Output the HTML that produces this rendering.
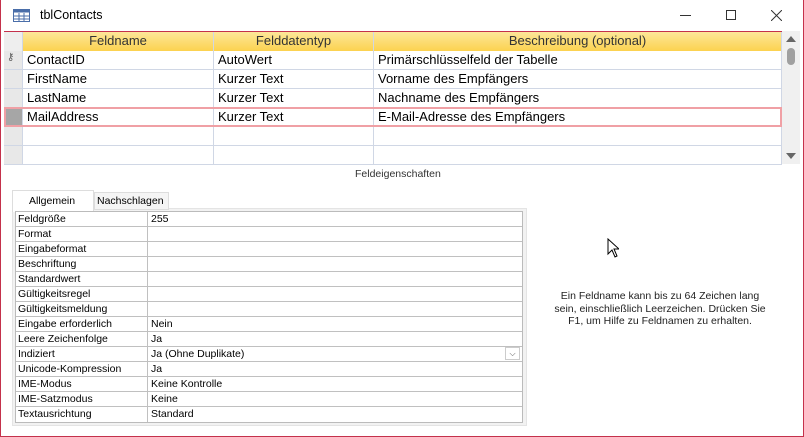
<!DOCTYPE html>
<html><head><style>
*{margin:0;padding:0;box-sizing:border-box}
body{width:804px;height:437px;background:#fff;font-family:"Liberation Sans",sans-serif;position:relative;overflow:hidden}
.win{position:absolute;left:0;top:0;width:804px;height:437px;border:1px solid #c4314b;border-top:none}
.title{position:absolute;left:40px;top:8px;font-size:12.5px;color:#000}
.abs{position:absolute}
.grid{position:absolute;left:4px;top:31px;width:778px;border-top:1px solid #c4314b}
.hdr{position:absolute;top:0;height:19px;background:linear-gradient(#fde79a,#fcd24f);color:#333;font-size:13px;text-align:center;line-height:18px;border-right:1px solid #d0d7e5}
.cell{position:absolute;height:19px;font-size:13px;line-height:18px;padding-left:4px;border-right:1px solid #d0d7e5;border-bottom:1px solid #d0d7e5;color:#000;background:#fff}
.sel{position:absolute;left:0;width:19px;height:19px;background:#e8e8e8;border-bottom:1px solid #d0d7e5;border-right:1px solid #d0d7e5}
.pt{position:absolute;left:15px;top:211px;width:508px;border:1px solid #bbb;background:#fff}
.pr{height:15px;border-bottom:1px solid #c0c0c0;font-size:10.5px;line-height:14px;display:flex}
.pr div:first-child{width:132px;border-right:1px solid #c0c0c0;padding-left:2px}
.pr div:last-child{padding-left:3px;flex:1}
</style></head><body>
<div class="win"></div>
<svg class="abs" style="left:13px;top:9px" width="17" height="13"><rect x="0.5" y="0.5" width="16" height="12" fill="#fff" stroke="#4a6ea9"/><rect x="0.5" y="0.5" width="16" height="3" fill="#4a6ea9"/><path d="M0 7H17M0 10H17M6 4V13M11 4V13" stroke="#4a6ea9"/></svg>
<div class="title">tblContacts</div>
<div class="abs" style="left:680px;top:15px;width:11px;border-top:1px solid #333"></div>
<div class="abs" style="left:726px;top:10px;width:10px;height:10px;border:1px solid #333"></div>
<svg class="abs" style="left:771px;top:10px" width="11" height="11"><path d="M0 0L11 11M11 0L0 11" stroke="#333"/></svg>
<div class="grid">
<div class="abs" style="left:0;top:0;width:19px;height:19px;background:#eee;border-right:1px solid #d0d7e5"></div>
<div class="hdr" style="left:19px;width:191px">Feldname</div>
<div class="hdr" style="left:210px;width:160px">Felddatentyp</div>
<div class="hdr" style="left:370px;width:408px">Beschreibung (optional)</div>
<div class="sel" style="top:19px"><span style="position:absolute;left:3px;top:1px;font-size:10px;color:#555">⚷</span></div>
<div class="cell" style="left:19px;top:19px;width:191px">ContactID</div><div class="cell" style="left:210px;top:19px;width:160px">AutoWert</div><div class="cell" style="left:370px;top:19px;width:408px">Primärschlüsselfeld der Tabelle</div>
<div class="sel" style="top:38px"></div>
<div class="cell" style="left:19px;top:38px;width:191px">FirstName</div><div class="cell" style="left:210px;top:38px;width:160px">Kurzer Text</div><div class="cell" style="left:370px;top:38px;width:408px">Vorname des Empfängers</div>
<div class="sel" style="top:57px"></div>
<div class="cell" style="left:19px;top:57px;width:191px">LastName</div><div class="cell" style="left:210px;top:57px;width:160px">Kurzer Text</div><div class="cell" style="left:370px;top:57px;width:408px">Nachname des Empfängers</div>
<div class="sel" style="top:76px;background:#a6a6a6"></div>
<div class="cell" style="left:19px;top:76px;width:191px">MailAddress</div><div class="cell" style="left:210px;top:76px;width:160px">Kurzer Text</div><div class="cell" style="left:370px;top:76px;width:408px">E-Mail-Adresse des Empfängers</div>
<div class="abs" style="left:0;top:75px;width:778px;height:20px;border:2px solid #f0a0a5"></div>
<div class="sel" style="top:95px"></div>
<div class="cell" style="left:19px;top:95px;width:191px"></div><div class="cell" style="left:210px;top:95px;width:160px"></div><div class="cell" style="left:370px;top:95px;width:408px"></div>
<div class="sel" style="top:114px"></div>
<div class="cell" style="left:19px;top:114px;width:191px"></div><div class="cell" style="left:210px;top:114px;width:160px"></div><div class="cell" style="left:370px;top:114px;width:408px"></div>
</div>
<div class="abs" style="left:782px;top:31px;width:18px;height:133px;background:#f0f0f0"></div>
<svg class="abs" style="left:785px;top:35px" width="12" height="125"><path d="M1 7L6 1L11 7Z" fill="#666"/><rect x="2" y="13" width="8" height="17" rx="4" fill="#a0a0a0"/><path d="M1 118L6 124L11 118Z" fill="#666"/></svg>
<div class="abs" style="left:355px;top:168px;font-size:10.5px;color:#333">Feldeigenschaften</div>
<div class="abs" style="left:12px;top:208px;width:515px;height:218px;background:#f2f2f2;border:1px solid #e4e4e4"></div>
<div class="abs" style="left:12px;top:190px;width:82px;height:22px;background:#fff;border:1px solid #ddd;border-bottom:none;font-size:10.5px;padding:4px 0 0 16px">Allgemein</div>
<div class="abs" style="left:94px;top:192px;width:75px;height:18px;background:#f5f5f5;border:1px solid #ddd;font-size:10.5px;padding:2px 0 0 2px">Nachschlagen</div>
<div class="pt">
<div class="pr"><div>Feldgröße</div><div>255</div></div>
<div class="pr"><div>Format</div><div></div></div>
<div class="pr"><div>Eingabeformat</div><div></div></div>
<div class="pr"><div>Beschriftung</div><div></div></div>
<div class="pr"><div>Standardwert</div><div></div></div>
<div class="pr"><div>Gültigkeitsregel</div><div></div></div>
<div class="pr"><div>Gültigkeitsmeldung</div><div></div></div>
<div class="pr"><div>Eingabe erforderlich</div><div>Nein</div></div>
<div class="pr"><div>Leere Zeichenfolge</div><div>Ja</div></div>
<div class="pr"><div>Indiziert</div><div style="position:relative">Ja (Ohne Duplikate)<span style="position:absolute;right:2px;top:0;width:15px;height:13px;border:1px solid #ccc;font-size:8px;text-align:center;line-height:12px;color:#555">⌵</span></div></div>
<div class="pr"><div>Unicode-Kompression</div><div>Ja</div></div>
<div class="pr"><div>IME-Modus</div><div>Keine Kontrolle</div></div>
<div class="pr"><div>IME-Satzmodus</div><div>Keine</div></div>
<div class="pr" style="border-bottom:none"><div>Textausrichtung</div><div>Standard</div></div>
</div>
<div class="abs" style="left:548px;top:290px;width:224px;font-size:10.5px;line-height:12.5px;text-align:center;color:#222">Ein Feldname kann bis zu 64 Zeichen lang<br>sein, einschließlich Leerzeichen. Drücken Sie<br>F1, um Hilfe zu Feldnamen zu erhalten.</div>
<svg class="abs" style="left:607px;top:238px" width="12" height="20"><path d="M1 1V16L5 12L8 19L10 18L7 11H12Z" fill="#fff" stroke="#000"/></svg>
</body></html>
